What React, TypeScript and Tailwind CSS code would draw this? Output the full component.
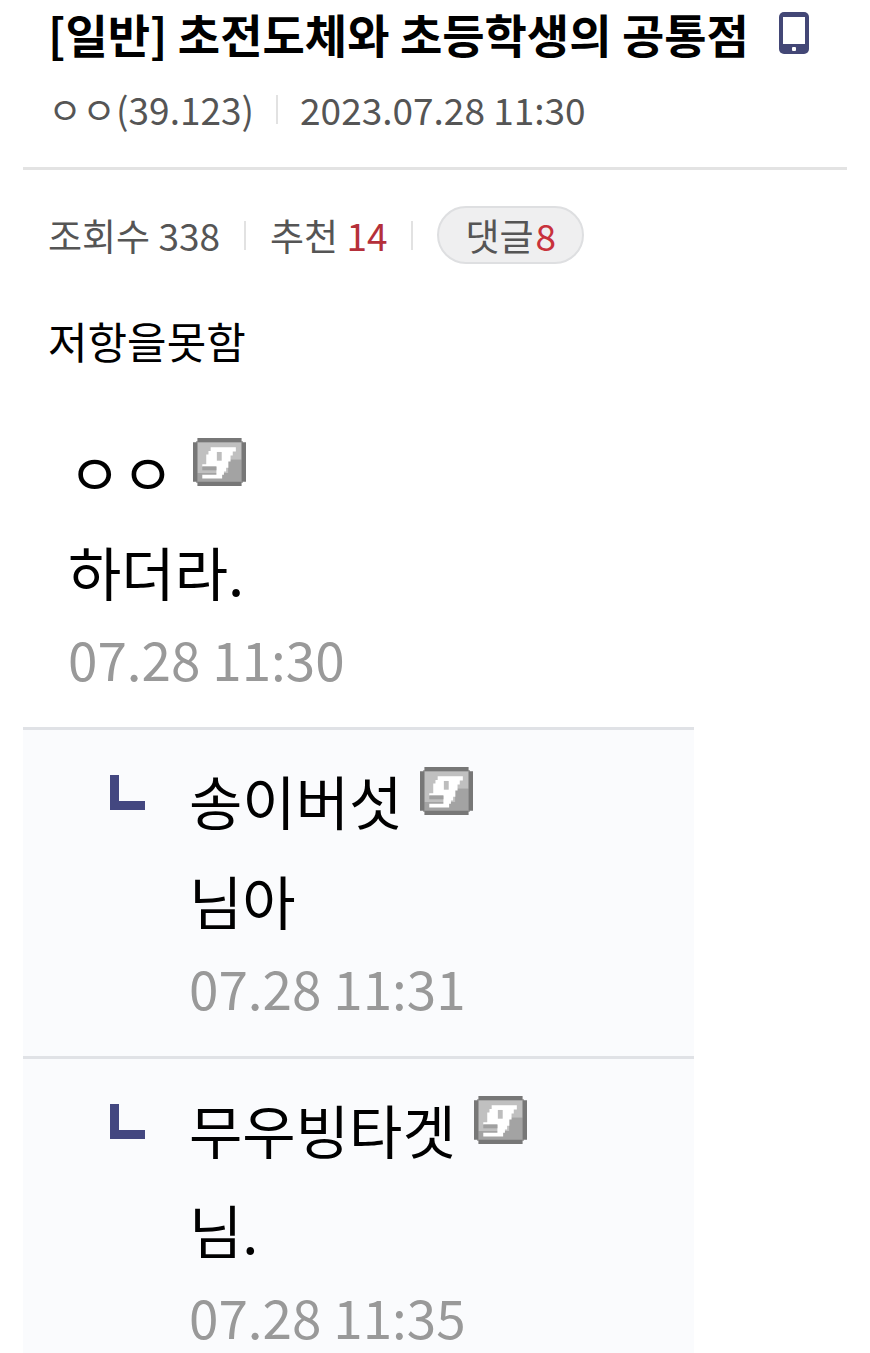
type CommentData = { name: string; text: string; time: string; reply?: boolean };

const comments: CommentData[] = [
  { name: 'ㅇㅇ', text: '하더라.', time: '07.28 11:30' },
  { name: '송이버섯', text: '님아', time: '07.28 11:31', reply: true },
  { name: '무우빙타겟', text: '님.', time: '07.28 11:35', reply: true },
];

function PhoneIcon() {
  return (
    <svg viewBox="0 0 30 42" className="h-[42px] w-[30px] shrink-0" role="img" aria-label="모바일">
      <rect width="30" height="42" rx="5" fill="#434776" />
      <rect x="4" y="5" width="22" height="27" fill="#fff" />
      <rect x="13" y="35" width="4" height="4" rx="1" fill="#fff" />
    </svg>
  );
}

function BadgeIcon() {
  return (
    <svg viewBox="0 0 12 11" preserveAspectRatio="none" className="mt-[17px] h-12 w-[53px] shrink-0" role="img" aria-label="고정닉">
      <rect x="0.7" y="0.7" width="10.6" height="9.6" fill="#a6a6a6" />
      <path d="M1 1h10v4H8v3H1z" fill="#c0c0c0" />
      <path d="M8 5h3v5H1V8h7z" fill="#a3a3a3" />
      <path d="M1 0h10v1H1zM0 1h1v9H0zM11 1h1v9h-1zM1 10h10v1H1z" fill="#777" />
      <path d="M4 2.1h5.7v1H9v.9h-.5v1.4H8v1.4h-.5v.9H7v.7h-.4v.9H2.1v-.9h3.2V6.6H2.1V6h.9V3.8h.5V3H4z" fill="#fff" />
      <path d="M5.4 3.2h1.1v2H5.4z" fill="#bdbdbd" />
      <path d="M2.1 6.5h3.2v.9H2.1z" fill="#a0a0a0" />
    </svg>
  );
}

function ReplyIcon() {
  return (
    <svg viewBox="0 0 35 35" className="mt-[25px] size-[35px] shrink-0" aria-hidden="true">
      <path d="M0 0h9v26h26v9H0z" fill="#434780" />
    </svg>
  );
}

function Divider() {
  return <span className="h-[29px] w-[2px] shrink-0 bg-[#e2e2e2]" />;
}

function Comment({ name, text, time, reply }: CommentData) {
  return (
    <li
      className={
        reply
          ? 'flex gap-11 border-t-[3px] border-[#e0e2e6] bg-[#fafbfd] pt-5 pb-8 pl-[87px] last:pb-0'
          : 'flex pb-8 pl-[45px]'
      }
    >
      {reply && <ReplyIcon />}
      <div>
        <div className="flex items-start gap-[18px]">
          <span className="text-[58px] leading-[100px]">{name}</span>
          <BadgeIcon />
        </div>
        <p className="text-[58px] leading-[100px]">{text}</p>
        <time className="block text-[53px] leading-[74px] text-[#999]">{time}</time>
      </div>
    </li>
  );
}

export default function App() {
  return (
    <main className="bg-white px-[23px] font-['Noto_Sans_CJK_KR',sans-serif] whitespace-nowrap text-black">
      <header className="border-b-[3px] border-[#e3e3e3] pb-9 pl-[25px]">
        <div className="flex items-center gap-[30px]">
          <h1 className="text-[46px] leading-[66px] font-bold">[일반] 초전도체와 초등학생의 공통점</h1>
          <PhoneIcon />
        </div>
        <div className="mt-[21px] flex items-center gap-[22px] text-[37px] leading-[44px] text-[#555]">
          <span>ㅇㅇ(39.123)</span>
          <Divider />
          <time>2023.07.28 11:30</time>
        </div>
      </header>
      <div className="mt-9 flex items-center gap-6 pl-[25px] text-[37px] leading-[52px] text-[#555]">
        <span>조회수 338</span>
        <Divider />
        <span>
          추천 <span className="text-[#b5303a]">14</span>
        </span>
        <Divider />
        <button type="button" className="flex h-[58px] items-center gap-[2px] rounded-full border-2 border-[#dedfe1] bg-[#efeff0] px-[26px]">
          댓글<span className="text-[#c8323c]">8</span>
        </button>
      </div>
      <p className="mt-[46px] pl-[25px] text-[43px] leading-[60px]">저항을못함</p>
      <ul className="mt-[51px] max-w-[671px]">
        {comments.map((c) => (
          <Comment key={c.time} {...c} />
        ))}
      </ul>
    </main>
  );
}
